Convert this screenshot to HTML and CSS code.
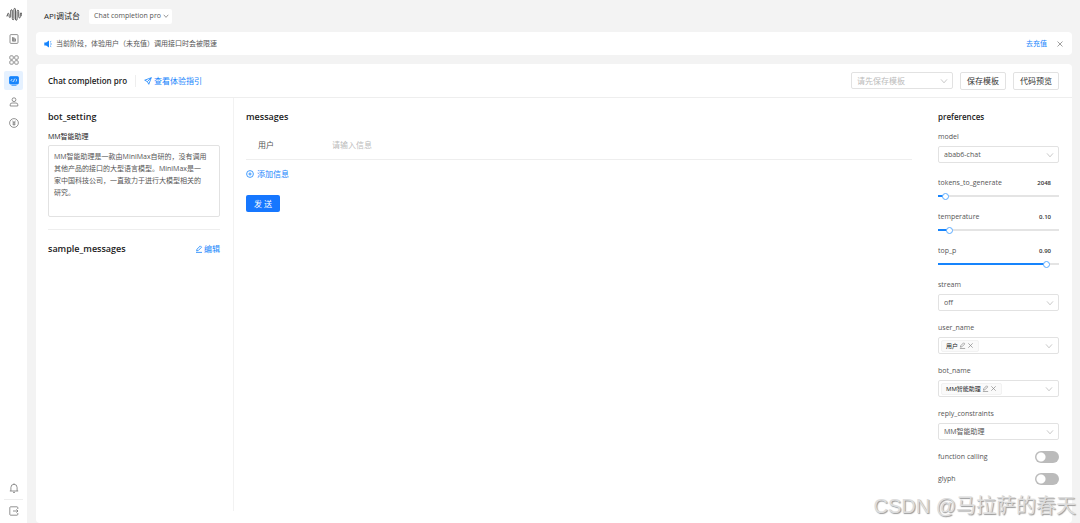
FILE: index.html
```html
<!DOCTYPE html>
<html lang="zh-CN">
<head>
    <meta charset="UTF-8">
    <meta name="viewport" content="width=device-width, initial-scale=1.0">
    <title>API调试台</title>
    <link rel="stylesheet" href="styles.css">
</head>
<body>
    <svg class="sprite" aria-hidden="true">
        <symbol id="chevron" viewBox="0 0 8 8"><path d="M1 2.4l3 3.4 3-3.4"/></symbol>
        <symbol id="close" viewBox="0 0 8 8"><path d="M1.5 1.5l5 5M6.5 1.5l-5 5"/></symbol>
        <symbol id="pencil" viewBox="0 0 8 8"><path d="M2 4.2L5.3.9l1.3 1.3-3.3 3.3-1.7.4zM1 7.4h6"/></symbol>
    </svg>
    <nav class="sidebar">
        <a class="logo" href="#" aria-label="首页">
            <svg viewBox="0 0 16 14"><path d="M.5 8.5q1 .8 1-1.2 0-1.5.8-1.5t.8 1.5v1.5q0 1.200.8 1.200t.8-1.200V3.500q0-1.300.8-1.300t.8 1.300v7.500q0 1.300.8 1.300t.8-1.300V2.200q0-1.300.8-1.300t.8 1.300v9.300q0 1.300.8 1.300t.8-1.300V4q0-1.300.8-1.300t.8 1.300v5.200q0 1.200.8 1.200t.8-1.200V6.500q0-1.200.7-1.200t.8 1.200v2.200"/></svg>
        </a>
        <a class="nav-item" href="#" aria-label="文档">
            <svg viewBox="0 0 10 10"><rect x="1" y=".6" width="8" height="8.800" rx="1"/><path d="M3.500 3v4.200h3V4.800H3.500M4.800 3v4M3.500 6h3"/></svg>
        </a>
        <a class="nav-item" href="#" aria-label="应用">
            <svg viewBox="0 0 10 10"><rect x=".8" y=".8" width="3.500" height="3.500" rx="1"/><rect x="5.700" y=".8" width="3.500" height="3.500" rx="1"/><rect x=".8" y="5.700" width="3.500" height="3.500" rx="1"/><rect x="5.700" y="5.700" width="3.500" height="3.500" rx="1"/></svg>
        </a>
        <a class="nav-item active" href="#" aria-label="调试台">
            <svg viewBox="0 0 10 10"><rect class="screen" x=".5" y=".6" width="9" height="7.400" rx="1"/><path d="M2.500 9.300h5"/><path class="code" d="M3.300 3L2 4.300l1.300 1.300M6.700 3L8 4.300 6.700 5.600M5.500 2.800l-1 3"/></svg>
        </a>
        <a class="nav-item" href="#" aria-label="账户">
            <svg viewBox="0 0 10 10"><circle cx="5" cy="2.700" r="1.900"/><path d="M1.200 9V7.800q0-1.800 1.800-1.800h4q1.800 0 1.800 1.800V9z"/></svg>
        </a>
        <a class="nav-item" href="#" aria-label="计费">
            <svg viewBox="0 0 10 10"><circle cx="5" cy="5" r="4.400"/><path d="M3.500 2.700L5 4.700l1.500-2M5 4.700v3M3.500 4.900h3M3.500 6.300h3"/></svg>
        </a>
        <a class="nav-item nav-bottom" href="#" aria-label="通知">
            <svg viewBox="0 0 10 10"><path d="M.8 8h8.400M1.900 8V4.500Q1.900 1.300 5 1.300t3.100 3.200V8M5 .4v.8M4 9.400h2"/></svg>
        </a>
        <a class="nav-item nav-exit" href="#" aria-label="退出">
            <svg viewBox="0 0 10 10"><path d="M8.800 3V1.600q0-.8-.8-.8H1.600q-.8 0-.8.8v6.800q0 .8.8.8H8q.8 0 .8-.8V7M4 5h5M7.400 3.400L9 5 7.400 6.600"/></svg>
        </a>
    </nav>

    <main class="page">
        <header class="topbar">
            <h1>API调试台</h1>
            <button class="api-picker">Chat completion pro <svg class="icon"><use href="#chevron"/></svg></button>
        </header>

        <div class="notice">
            <svg class="horn" viewBox="0 0 8 8"><path d="M.3 2.500h1.800L5 .4v7.200L2.100 5.500H.3z"/><path class="waves" d="M6.200 4h1.600M6 2.200l1.200-.8M6 5.800l1.200.8"/></svg>
            <span>当前阶段，体验用户（未充值）调用接口时会被限速</span>
            <a class="recharge" href="#">去充值</a>
            <button class="icon-button" aria-label="关闭"><svg class="icon"><use href="#close"/></svg></button>
        </div>

        <section class="card">
            <div class="card-header">
                <h2>Chat completion pro</h2>
                <a class="guide" href="#"><svg class="icon" viewBox="0 0 8 8"><path d="M7.300.7L.7 3.200l2.700 1.400 1.400 2.700zM7.300.7L3.400 4.600"/></svg>查看体验指引</a>
                <div class="select template">
                    <select aria-label="模板"><option>请先保存模板</option></select>
                    <svg class="icon"><use href="#chevron"/></svg>
                </div>
                <button class="button">保存模板</button>
                <button class="button">代码预览</button>
            </div>

            <div class="columns">
                <section class="settings">
                    <h2>bot_setting</h2>
                    <label class="bot-label" for="bot">MM智能助理</label>
                    <textarea id="bot">MM智能助理是一款由MiniMax自研的，没有调用其他产品的接口的大型语言模型。MiniMax是一家中国科技公司，一直致力于进行大模型相关的研究。</textarea>
                    <div class="samples">
                        <h2>sample_messages</h2>
                        <a href="#"><svg class="icon"><use href="#pencil"/></svg>编辑</a>
                    </div>
                </section>

                <section class="messages">
                    <h2>messages</h2>
                    <div class="message-row">
                        <label for="message">用户</label>
                        <input id="message" type="text" placeholder="请输入信息">
                    </div>
                    <button class="add"><svg class="icon" viewBox="0 0 8 8"><circle cx="4" cy="4" r="3.400"/><path d="M4 2.400v3.200M2.400 4h3.200"/></svg>添加信息</button>
                    <button class="send">发 送</button>
                </section>

                <section class="preferences">
                    <h3>preferences</h3>
                    <div class="field model">
                        <label for="model">model</label>
                        <div class="select">
                            <select id="model"><option>abab6-chat</option></select>
                            <svg class="icon"><use href="#chevron"/></svg>
                        </div>
                    </div>
                    <div class="field">
                        <div class="field-head"><label for="tokens">tokens_to_generate</label><output for="tokens">2048</output></div>
                        <div class="slider" style="--fill: 6%"><input id="tokens" type="range" min="1" max="32768" value="2048"></div>
                    </div>
                    <div class="field">
                        <div class="field-head"><label for="temperature">temperature</label><output for="temperature">0.10</output></div>
                        <div class="slider" style="--fill: 9%"><input id="temperature" type="range" min="0.01" max="1" step="0.01" value="0.1"></div>
                    </div>
                    <div class="field">
                        <div class="field-head"><label for="top-p">top_p</label><output for="top-p">0.90</output></div>
                        <div class="slider" style="--fill: 90%"><input id="top-p" type="range" min="0.01" max="1" step="0.01" value="0.9"></div>
                    </div>
                    <div class="field">
                        <label for="stream">stream</label>
                        <div class="select">
                            <select id="stream"><option>off</option><option>on</option></select>
                            <svg class="icon"><use href="#chevron"/></svg>
                        </div>
                    </div>
                    <div class="field">
                        <label for="user-name">user_name</label>
                        <div class="tag-field">
                            <span class="tag">用户
                                <button class="icon-button" aria-label="编辑"><svg class="icon"><use href="#pencil"/></svg></button>
                                <button class="icon-button" aria-label="删除"><svg class="icon"><use href="#close"/></svg></button>
                            </span>
                            <button id="user-name" class="open"><svg class="icon"><use href="#chevron"/></svg></button>
                        </div>
                    </div>
                    <div class="field">
                        <label for="bot-name">bot_name</label>
                        <div class="tag-field">
                            <span class="tag">MM智能助理
                                <button class="icon-button" aria-label="编辑"><svg class="icon"><use href="#pencil"/></svg></button>
                                <button class="icon-button" aria-label="删除"><svg class="icon"><use href="#close"/></svg></button>
                            </span>
                            <button id="bot-name" class="open"><svg class="icon"><use href="#chevron"/></svg></button>
                        </div>
                    </div>
                    <div class="field">
                        <label for="reply">reply_constraints</label>
                        <div class="select">
                            <select id="reply"><option>MM智能助理</option></select>
                            <svg class="icon"><use href="#chevron"/></svg>
                        </div>
                    </div>
                    <div class="toggle-row">
                        <label for="function-calling">function calling</label>
                        <input id="function-calling" class="switch" type="checkbox" role="switch">
                    </div>
                    <div class="toggle-row">
                        <label for="glyph">glyph</label>
                        <input id="glyph" class="switch" type="checkbox" role="switch">
                    </div>
                </section>
            </div>
        </section>
    </main>
    <div class="watermark">CSDN @马拉萨的春天</div>
</body>
</html>
```
FILE: styles.css
```css
* {
    box-sizing: border-box;
}

body {
    display: flex;
    margin: 0;
    min-height: 100vh;
    background: #f3f3f3;
    color: #555;
    font: 7px/12px "Open Sans", "Noto Sans CJK SC", sans-serif;
}

h1, h2, h3 {
    margin: 0;
    font-weight: 600;
    color: #222;
}

h2 {
    font-size: 9px;
    line-height: 14px;
}

h3 {
    font-size: 8px;
    line-height: 14px;
}

a {
    color: #1684fc;
    text-decoration: none;
}

button, input, select, textarea {
    font: inherit;
    color: inherit;
}

button {
    padding: 0;
    border: 0;
    background: none;
    cursor: pointer;
}

svg {
    fill: none;
    stroke: currentColor;
    stroke-width: 0.8;
    flex-shrink: 0;
}

.sprite {
    position: absolute;
    width: 0;
    height: 0;
}

.icon {
    width: 8px;
    height: 8px;
}

/* Sidebar */
.sidebar {
    display: flex;
    flex-direction: column;
    align-items: center;
    width: 27px;
    padding: 7px 0 2px;
    background: white;
}

.logo {
    display: flex;
    height: 22px;
    color: #333;
}

.logo svg {
    width: 16px;
    height: 15px;
}

.nav-item {
    display: flex;
    align-items: center;
    justify-content: center;
    width: 19px;
    height: 19px;
    margin-bottom: 2px;
    border-radius: 2px;
    color: #777;
}

.nav-item svg {
    width: 10px;
    height: 10px;
}

.nav-item.active {
    background: #e5f1ff;
    color: #1684fc;
}

.screen {
    fill: currentColor;
}

.code {
    stroke: white;
}

.nav-bottom {
    margin-top: auto;
}

.nav-exit {
    height: 22px;
    margin-bottom: 0;
    border-top: 1px solid #eee;
    border-radius: 0;
}

/* Page */
.page {
    display: flex;
    flex: 1;
    flex-direction: column;
    padding: 8px 8px 0 9px;
}

.topbar {
    display: flex;
    align-items: center;
    gap: 9px;
    height: 16px;
    padding-left: 8px;
}

h1 {
    font-size: 8px;
    font-weight: 400;
}

.api-picker {
    display: flex;
    align-items: center;
    gap: 2px;
    height: 15px;
    padding: 0 3px 0 5px;
    border-radius: 2px;
    background: white;
}

.api-picker .icon {
    width: 6px;
}

.notice {
    display: flex;
    align-items: center;
    height: 23px;
    margin: 8px 0 9px;
    padding: 0 8px;
    border-radius: 4px;
    background: white;
}

.horn {
    width: 8px;
    height: 8px;
    margin-right: 4px;
    fill: #1684fc;
    stroke: none;
}

.waves {
    stroke: #1684fc;
}

.recharge {
    margin: 0 9px 0 auto;
}

.icon-button {
    display: flex;
    color: #888;
}

.card {
    display: flex;
    flex: 1;
    flex-direction: column;
    border-radius: 4px;
    background: white;
}

.card-header {
    display: flex;
    align-items: center;
    height: 34px;
    padding: 0 13px 0 12px;
    border-bottom: 1px solid #eee;
}

.card-header h2 {
    font-size: 8px;
}

.guide {
    display: flex;
    align-items: center;
    gap: 2px;
    margin-left: 8px;
    padding-left: 8px;
    border-left: 1px solid #eee;
    font-size: 8px;
}

.button {
    width: 46px;
    height: 18px;
    margin-left: 7px;
    border: 1px solid #e2e2e2;
    border-radius: 2px;
    color: #333;
    font-size: 8px;
}

.select {
    position: relative;
    display: flex;
}

.select select {
    flex: 1;
    height: 17px;
    padding: 0 5px;
    border: 1px solid #e2e2e2;
    border-radius: 2px;
    background: white;
    appearance: none;
}

/* The arrow lies over the native control */
.select .icon {
    position: absolute;
    top: 5px;
    right: 5px;
    color: #bbb;
    pointer-events: none;
}

.template {
    width: 102px;
    margin-left: auto;
    color: #bbb;
    font-size: 8px;
}

.columns {
    display: flex;
    flex: 1;
    padding-bottom: 12px;
}

/* Bot settings */
.settings {
    display: flex;
    flex-direction: column;
    width: 198px;
    padding: 12px 13px 0 12px;
    border-right: 1px solid #f2f2f2;
}

.bot-label {
    margin-top: 7px;
    color: #222;
}

.settings textarea {
    height: 72px;
    margin-top: 2px;
    padding: 5px 12px 5px 5px;
    border: 1px solid #e2e2e2;
    border-radius: 2px;
    resize: none;
    overflow: hidden;
}

.samples {
    display: flex;
    align-items: center;
    justify-content: space-between;
    margin-top: 12px;
    padding-top: 12px;
    border-top: 1px solid #eee;
}

.samples a {
    display: flex;
    align-items: center;
    gap: 1px;
    font-size: 8px;
}

/* Messages */
.messages {
    display: flex;
    flex: 1;
    flex-direction: column;
    align-items: flex-start;
    padding: 12px 0 0 12px;
}

.message-row {
    display: flex;
    align-items: center;
    width: 100%;
    height: 30px;
    margin-top: 6px;
    border-bottom: 1px solid #eee;
    font-size: 8px;
}

.message-row label {
    width: 86px;
    padding-left: 12px;
}

.message-row input {
    flex: 1;
    padding: 0;
    border: 0;
    outline: 0;
}

.message-row input::placeholder {
    color: #bbb;
}

.add {
    display: flex;
    align-items: center;
    gap: 3px;
    margin-top: 8px;
    color: #1684fc;
    font-size: 8px;
}

.send {
    width: 34px;
    height: 17px;
    margin-top: 15px;
    border-radius: 2px;
    background: #1677ff;
    color: white;
    font-size: 8px;
}

/* Preferences */
.preferences {
    width: 160px;
    padding: 12px 13px 0 26px;
}

.preferences h3 {
    margin-bottom: 7px;
}

.field {
    display: flex;
    flex-direction: column;
    gap: 3px;
    margin-bottom: 11px;
}

.field.model {
    margin-bottom: 14px;
}

.field-head {
    display: flex;
    justify-content: space-between;
    padding-right: 8px;
}

output {
    font-size: 6px;
    font-weight: 600;
    color: #333;
}

.slider {
    display: flex;
    height: 8px;
    background: linear-gradient(to right, #1684fc var(--fill), #e4e4e4 var(--fill)) center / 100% 2px no-repeat;
}

.slider input {
    flex: 1;
    min-width: 0;
    height: 8px;
    margin: 0 -3px;
    background: none;
    appearance: none;
}

.slider input::-webkit-slider-thumb {
    width: 7px;
    height: 7px;
    border: 1px solid #5aabff;
    border-radius: 50%;
    background: white;
    appearance: none;
}

.tag-field {
    display: flex;
    align-items: center;
    height: 17px;
    padding: 0 5px 0 2px;
    border: 1px solid #e2e2e2;
    border-radius: 2px;
}

.tag {
    display: flex;
    align-items: center;
    gap: 1px;
    height: 12px;
    padding: 0 4px;
    border: 1px solid #f2f2f2;
    border-radius: 2px;
    background: #fafafa;
    color: #222;
    font-size: 6px;
}

.tag .icon {
    width: 7px;
    height: 7px;
}

.open {
    display: flex;
    flex: 1;
    justify-content: flex-end;
    color: #bbb;
}

.toggle-row {
    display: flex;
    align-items: center;
    justify-content: space-between;
    height: 12px;
    margin-bottom: 10px;
}

.switch {
    width: 24px;
    height: 12px;
    margin: 0;
    border-radius: 6px;
    background: radial-gradient(circle at 6px 6px, white 4px, #bbb 5px);
    appearance: none;
}

.watermark {
    position: absolute;
    right: 4px;
    bottom: 4px;
    color: #ddd;
    font: 20px/26px "Liberation Sans", "Noto Sans CJK SC", sans-serif;
    text-shadow: 1px 1px 1px #999;
    pointer-events: none;
}
```
